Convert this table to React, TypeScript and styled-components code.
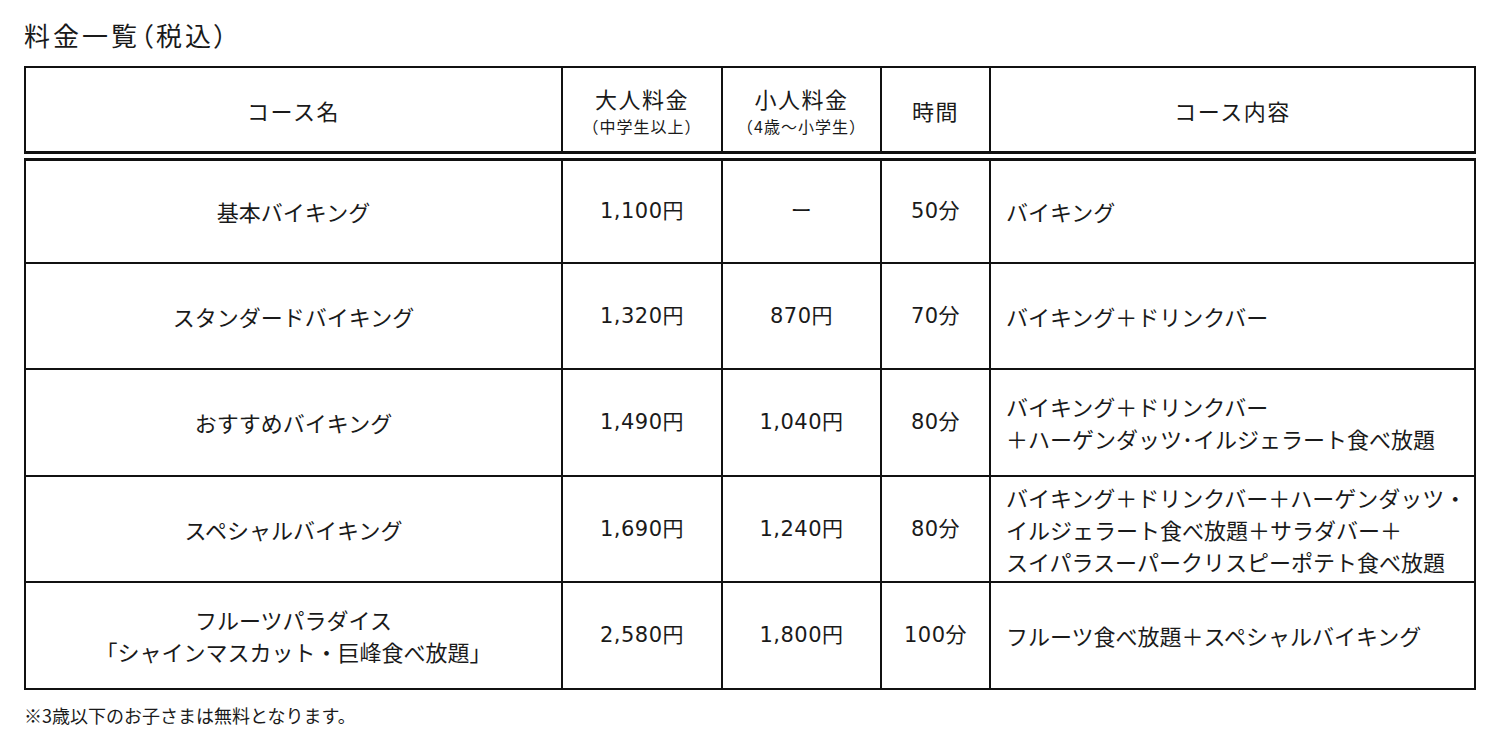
import React from "react";
import styled, { createGlobalStyle } from "styled-components";

const GlobalStyle = createGlobalStyle`
  body {
    margin: 0;
    background: #fff;
    color: #1a1a1a;
    font-family: "Noto Sans CJK JP", "Noto Sans", sans-serif;
  }
`;

interface Course {
  name: string[];
  adult: string;
  child: string;
  time: string;
  content: string[];
}

const courses: Course[] = [
  { name: ["基本バイキング"], adult: "1,100円", child: "ー", time: "50分", content: ["バイキング"] },
  { name: ["スタンダードバイキング"], adult: "1,320円", child: "870円", time: "70分", content: ["バイキング＋ドリンクバー"] },
  {
    name: ["おすすめバイキング"],
    adult: "1,490円",
    child: "1,040円",
    time: "80分",
    content: ["バイキング＋ドリンクバー", "＋ハーゲンダッツ･イルジェラート食べ放題"],
  },
  {
    name: ["スペシャルバイキング"],
    adult: "1,690円",
    child: "1,240円",
    time: "80分",
    content: [
      "バイキング＋ドリンクバー＋ハーゲンダッツ・",
      "イルジェラート食べ放題＋サラダバー＋",
      "スイパラスーパークリスピーポテト食べ放題",
    ],
  },
  {
    name: ["フルーツパラダイス", "「シャインマスカット・巨峰食べ放題」"],
    adult: "2,580円",
    child: "1,800円",
    time: "100分",
    content: ["フルーツ食べ放題＋スペシャルバイキング"],
  },
];

export default function App() {
  return (
    <>
      <GlobalStyle />
      <Page>
        <Title>料金一覧（税込）</Title>
        <Table>
          <colgroup>
            <col style={{ width: 537 }} />
            <col style={{ width: 160 }} />
            <col style={{ width: 159 }} />
            <col style={{ width: 109 }} />
            <col />
          </colgroup>
          <thead>
            <tr>
              <Th>コース名</Th>
              <Th>
                大人料金
                <Sub>（中学生以上）</Sub>
              </Th>
              <Th>
                小人料金
                <Sub>（4歳〜小学生）</Sub>
              </Th>
              <Th>時間</Th>
              <Th>コース内容</Th>
            </tr>
          </thead>
          <tbody>
            {courses.map((c) => (
              <Row key={c.name[0]}>
                <Td>
                  {c.name.map((n) => (
                    <Line key={n}>{n}</Line>
                  ))}
                </Td>
                <NumTd>{c.adult}</NumTd>
                <NumTd>{c.child}</NumTd>
                <NumTd>{c.time}</NumTd>
                <ContentTd>
                  {c.content.map((n) => (
                    <Line key={n}>{n}</Line>
                  ))}
                </ContentTd>
              </Row>
            ))}
          </tbody>
        </Table>
        <Note>※3歳以下のお子さまは無料となります。</Note>
      </Page>
    </>
  );
}

const Page = styled.div`
  padding: 17px 24px 0 24px;
  width: 1452px;
`;

const Title = styled.h1`
  margin: 0 0 13px;
  font-size: 26px;
  font-weight: 400;
  line-height: 36px;
  letter-spacing: 3px;
  font-feature-settings: "palt" 1;
`;

const Table = styled.table`
  width: 1452px;
  border-collapse: collapse;
  table-layout: fixed;
  border: 2px solid #111;
`;

const Th = styled.th`
  height: 83px;
  padding: 0;
  border: 2px solid #111;
  border-bottom: 10px double #111;
  font-size: 22px;
  font-weight: 400;
  line-height: 32px;
  letter-spacing: 1.5px;
  text-align: center;
  vertical-align: middle;
`;

const Sub = styled.span`
  display: block;
  font-size: 16px;
  line-height: 24px;
  letter-spacing: 1px;
  white-space: nowrap;
`;

const Row = styled.tr`
  height: 106.5px;
`;

const Td = styled.td`
  padding: 0;
  border: 2px solid #111;
  font-size: 22px;
  line-height: 32px;
  text-align: center;
  vertical-align: middle;
`;

const NumTd = styled(Td)`
  font-family: "DejaVu Sans", "Noto Sans CJK JP", sans-serif;
  font-size: 21px;
  letter-spacing: 0.5px;
`;

const ContentTd = styled(Td)`
  padding-left: 15px;
  text-align: left;
`;

const Line = styled.div``;

const Note = styled.p`
  margin: 12px 0 0;
  font-size: 18px;
  line-height: 26px;
`;
